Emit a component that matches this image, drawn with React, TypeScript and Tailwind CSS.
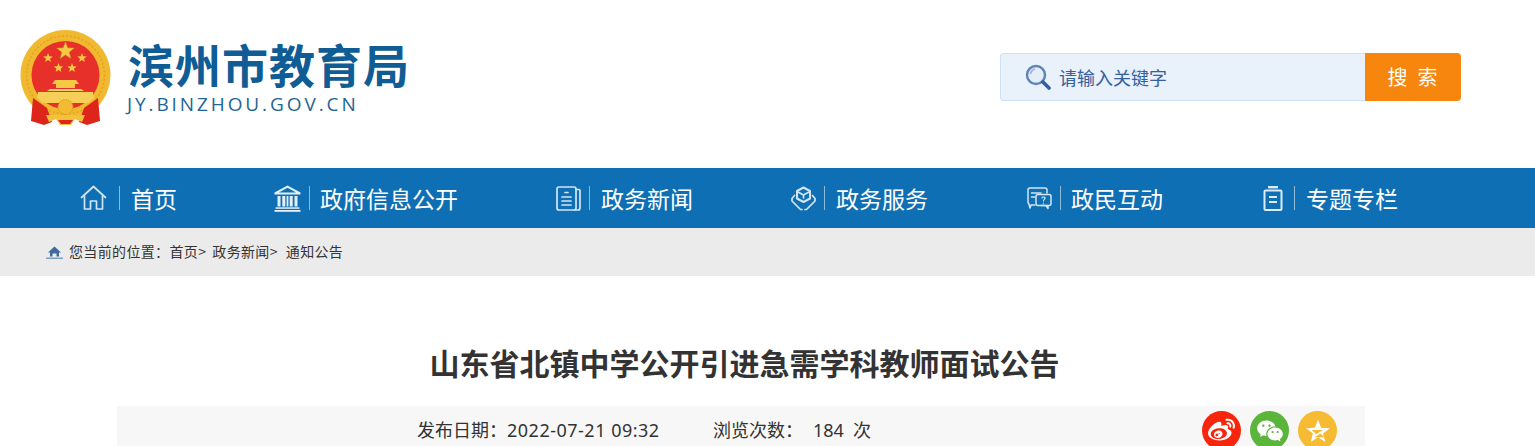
import React from 'react';
import { FaWeibo } from 'react-icons/fa';
import { RiWechatFill } from 'react-icons/ri';

const star = (cx: number, cy: number, r: number) => {
  const pts: string[] = [];
  for (let i = 0; i < 10; i++) {
    const rad = i % 2 === 0 ? r : r * 0.42;
    const a = -Math.PI / 2 + (i * Math.PI) / 5;
    pts.push(`${(cx + rad * Math.cos(a)).toFixed(2)},${(cy + rad * Math.sin(a)).toFixed(2)}`);
  }
  return pts.join(' ');
};

// 国徽
const Emblem = () => (
  <svg viewBox="20 29 92 98" className="w-[92px] h-[98px] shrink-0">
    <circle cx="65.5" cy="75" r="45" fill="#f0b92f" />
    <circle cx="65.5" cy="75" r="39" fill="none" stroke="#e3a321" strokeWidth="1.5" strokeDasharray="2 2" />
    <circle cx="65.5" cy="75" r="34" fill="#e8302a" />
    <polygon points={star(65.5, 51, 9.5)} fill="#f6c945" stroke="#b8791a" strokeWidth="0.5" />
    <polygon points={star(48, 58, 5)} fill="#f6c945" />
    <polygon points={star(82, 58, 5)} fill="#f6c945" />
    <polygon points={star(58.5, 68, 5)} fill="#f6c945" />
    <polygon points={star(72, 68, 5)} fill="#f6c945" />
    <path d="M55 80 H76 L79 84 H75 V88 H56 V84 H52 Z" fill="#f6c945" />
    <path d="M50 89 H81 L84 91 H47 Z" fill="#f3cf6a" />
    <path d="M38 92 H93 L94 98 L88 103 H43 L37 98 Z" fill="#f6cf58" />
    <path d="M33 98 L47 108 L52 122 L44 125 L31 121 Z" fill="#dd251c" />
    <path d="M98 98 L84 108 L79 122 L87 125 L100 121 Z" fill="#dd251c" />
    <circle cx="65.5" cy="107" r="7.5" fill="#f2bb33" stroke="#d8951c" strokeWidth="1" strokeDasharray="1.5 1" />
    <path d="M46 115 H85 L82 122 L75 119 L71 125 H60 L56 119 L49 122 Z" fill="#f4c23a" />
    <path d="M58 120 H73 L70 124 H61 Z" fill="#dd251c" />
  </svg>
);

const SearchGlass = () => (
  <svg viewBox="0 0 26 26" className="w-[26px] h-[26px] shrink-0">
    <circle cx="11" cy="11" r="9" fill="#e4edf8" stroke="#5f83b8" strokeWidth="2.4" />
    <path d="M5.5 10 A6 6 0 0 1 10 5" fill="none" stroke="#a5bcdc" strokeWidth="2" />
    <path d="M18 18 L24 24" stroke="#2f5fa6" strokeWidth="3.6" strokeLinecap="round" />
  </svg>
);

const stroke = {
  fill: 'none',
  stroke: '#d3e5f2',
  strokeWidth: 1.7,
  strokeLinejoin: 'round' as const,
  strokeLinecap: 'round' as const,
};

const HomeIcon = () => (
  <svg viewBox="0 0 27 26" className="w-[27px] h-[26px]" {...stroke}>
    <path d="M1.5 12.5 L13.5 1.5 L25.5 12.5" />
    <path d="M4.5 11 V24 H10.5 V16 H16.5 V24 H22.5 V11" />
  </svg>
);

const BankIcon = () => (
  <svg viewBox="0 0 27 27" className="w-[27px] h-[27px]" fill="#e3eff7">
    <path d="M13.5 0.5 L26.5 7.5 V9.5 H0.5 V7.5 Z M13.5 2.8 L5 7.5 H22 Z" fillRule="evenodd" />
    <rect x="3.5" y="11" width="3" height="10.5" />
    <rect x="8.3" y="11" width="3" height="10.5" />
    <rect x="15.7" y="11" width="3" height="10.5" />
    <rect x="20.5" y="11" width="3" height="10.5" />
    <rect x="12.6" y="11" width="1.8" height="10.5" />
    <rect x="1.5" y="22.3" width="24" height="1.5" />
    <rect x="0.5" y="25" width="26" height="1.8" />
  </svg>
);

const NewsIcon = () => (
  <svg viewBox="0 0 25 25" className="w-[25px] h-[25px]" {...stroke}>
    <rect x="1" y="1" width="19" height="23" rx="2" />
    <path d="M20 3.5 H23 A1 1 0 0 1 24 4.5 V22 A2 2 0 0 1 22 24 H19" />
    <path d="M9 6.5 H12 M6 11 H15 M6 15 H15 M6 19 H15" />
  </svg>
);

const ServiceIcon = () => (
  <svg viewBox="0 0 25 25" className="w-[25px] h-[25px]" {...stroke}>
    <path d="M12.5 1.5 L19 5 V12.5 L12.5 16 L6 12.5 V5 Z" strokeWidth={2} />
    <path d="M7 6 L12.5 9 L18 6 M12.5 9 V12" />
    <path d="M3.5 9.5 L1 12.5 V15 L9.5 23.5 H11 M21.5 9.5 L24 12.5 V15 L15.5 23.5 H14" />
  </svg>
);

const ChatIcon = () => (
  <svg viewBox="0 0 25 23" className="w-[25px] h-[23px]" {...stroke} strokeWidth={1.5}>
    <path d="M8 18 H4 L3 21 L2 17 A2 2 0 0 1 1 15 V3 A2 2 0 0 1 3 1 H18 A2 2 0 0 1 20 3 V6" />
    <path d="M4.5 6 H14 M4.5 10 H8" />
    <rect x="9" y="7.5" width="15" height="11" rx="2" />
    <path d="M14 18.5 L19 18.5 L21 21.5 L21 18.5" />
    <path d="M15 11 C15.5 9.5 18.5 9.8 18 11.5 C17.7 12.5 16.5 12.5 16.5 14 M16.5 16 V16.2" strokeWidth={1.2} />
  </svg>
);

const ClipIcon = () => (
  <svg viewBox="0 0 20 25" className="w-[20px] h-[25px]" fill="none" stroke="#dcebf5" strokeWidth="2">
    <path d="M5 1.2 H15" strokeWidth="2.4" />
    <rect x="1.5" y="4.5" width="17" height="19.5" rx="1" />
    <path d="M6 11 H14 M6 16 H14" />
  </svg>
);

const QzoneIcon = () => (
  <svg viewBox="0 0 24 24" className="w-[24px] h-[24px]">
    <polygon points={star(12, 13, 12.5)} fill="#fff" />
    <polygon points="6,11 17,11 10,15.2" fill="#f6bb33" />
    <polygon points="18.5,18.2 8.5,18.2 14.5,14.4" fill="#f6bb33" />
  </svg>
);

const navItems = [
  { label: '首页', icon: <HomeIcon />, width: 'w-[194px]', iconBox: 'w-[27px]', gap: 'mr-[12px]', textGap: 'ml-[11px]' },
  { label: '政府信息公开', icon: <BankIcon />, width: 'w-[282px]', iconBox: 'w-[27px]', gap: 'mr-[8px]', textGap: 'ml-[10px]' },
  { label: '政务新闻', icon: <NewsIcon />, width: 'w-[235px]', iconBox: 'w-[25px]', gap: 'mr-[8px]', textGap: 'ml-[11px]' },
  { label: '政务服务', icon: <ServiceIcon />, width: 'w-[236px]', iconBox: 'w-[25px]', gap: 'mr-[8px]', textGap: 'ml-[11px]' },
  { label: '政民互动', icon: <ChatIcon />, width: 'w-[236px]', iconBox: 'w-[25px]', gap: 'mr-[8px]', textGap: 'ml-[10px]' },
  { label: '专题专栏', icon: <ClipIcon />, width: 'w-[200px]', iconBox: 'w-[20px]', gap: 'mr-[11px]', textGap: 'ml-[11px]' },
];

export default function App() {
  return (
    <div className="w-[1535px] h-[446px] overflow-hidden bg-white font-['Noto_Sans','Noto_Sans_CJK_SC',sans-serif]">
      {/* 头部 */}
      <header className="h-[168px] flex items-start pl-[20px]">
        <div className="flex items-start pt-[29px]">
          <Emblem />
          <div className="ml-[16px] pt-[8px] w-[279px]">
            <div className="text-[#0f5d94] text-[46px] leading-[52px] font-bold tracking-[1px] whitespace-nowrap font-['Noto_Sans_CJK_SC',sans-serif]">
              滨州市教育局
            </div>
            <div className="ml-[-1px] mt-[3px] text-[#1f6596] text-[19px] leading-[24px] tracking-[2.9px] whitespace-nowrap font-['Open_Sans',sans-serif]">
              JY.BINZHOU.GOV.CN
            </div>
          </div>
        </div>
        <div className="ml-[593px] mt-[53px] flex h-[48px] w-[461px]">
          <div className="flex-1 flex items-center pl-[24px] bg-[#e9f1fa] border border-[#cfe1f8] border-r-0 rounded-l-[4px]">
            <SearchGlass />
            <span className="ml-[8px] text-[18px] text-[#34609f] font-['Noto_Sans_CJK_SC',sans-serif]">请输入关键字</span>
          </div>
          <div className="w-[96px] flex items-center justify-center bg-[#f7860f] text-white text-[20px] tracking-[10px] pl-[9px] rounded-r-[4px] font-['Noto_Sans_CJK_SC',sans-serif]">
            搜索
          </div>
        </div>
      </header>

      {/* 导航 */}
      <nav className="h-[60px] bg-[#0f6fb4] flex items-center pl-[80px]">
        {navItems.map((item) => (
          <div key={item.label} className={`${item.width} shrink-0 flex items-center`}>
            <div className={`${item.iconBox} ${item.gap} flex justify-center`}>{item.icon}</div>
            <div className="w-px h-[24px] bg-[#8fbbd9]" />
            <span className={`${item.textGap} text-white text-[23px] leading-[24px] whitespace-nowrap font-['Noto_Sans_CJK_SC',sans-serif]`}>
              {item.label}
            </span>
          </div>
        ))}
      </nav>

      {/* 面包屑 */}
      <div className="h-[48px] bg-[#ebebeb] flex items-center pl-[46px] pb-[2px] text-[14px] tracking-[0.35px] text-[#333] font-['Noto_Sans_CJK_SC',sans-serif]">
        <svg viewBox="0 0 17 13" className="w-[17px] h-[13px] mr-[6px] mt-[3px]">
          <path d="M8.5 0.5 L15 6.5 H13 V10.5 H10.5 V7.5 H6.5 V10.5 H4 V6.5 H2 Z" fill="#3f6a9c" />
          <path d="M0 11.5 H17 V13 H0 Z" fill="#7f9dc0" />
        </svg>
        <span>您当前的位置：首页&gt;</span>
        <span className="ml-[6px]">政务新闻&gt;</span>
        <span className="ml-[8px]">通知公告</span>
      </div>

      {/* 标题 */}
      <main className="ml-[117px] w-[1248px]">
        <h1 className="pt-[66px] pl-[7px] h-[130px] text-center text-[30px] leading-[40px] font-bold text-[#333] whitespace-nowrap font-['Noto_Sans_CJK_SC',sans-serif]">
          山东省北镇中学公开引进急需学科教师面试公告
        </h1>
        <div className="h-[60px] bg-[#f7f7f7] flex items-start text-[18px] leading-[24px] text-[#333]">
          <span className="ml-[300px] mt-[12px] w-[296px] whitespace-nowrap">
            发布日期：<span className="tracking-[0.5px]">2022-07-21 09:32</span>
          </span>
          <span className="mt-[12px] w-[189px] whitespace-nowrap">
            浏览次数：<span className="ml-[10px]">184</span><span className="ml-[9px]">次</span>
          </span>
          <div className="ml-[300px] mt-[5px] flex gap-[9px]">
            <div className="w-[39px] h-[39px] rounded-full bg-[#f6250c] flex items-center justify-center text-white">
              <FaWeibo size={27} />
            </div>
            <div className="w-[39px] h-[39px] rounded-full bg-[#5bb53b] flex items-center justify-center text-white">
              <RiWechatFill size={28} />
            </div>
            <div className="w-[39px] h-[39px] rounded-full bg-[#f6bb33] flex items-center justify-center">
              <QzoneIcon />
            </div>
          </div>
        </div>
      </main>
    </div>
  );
}
